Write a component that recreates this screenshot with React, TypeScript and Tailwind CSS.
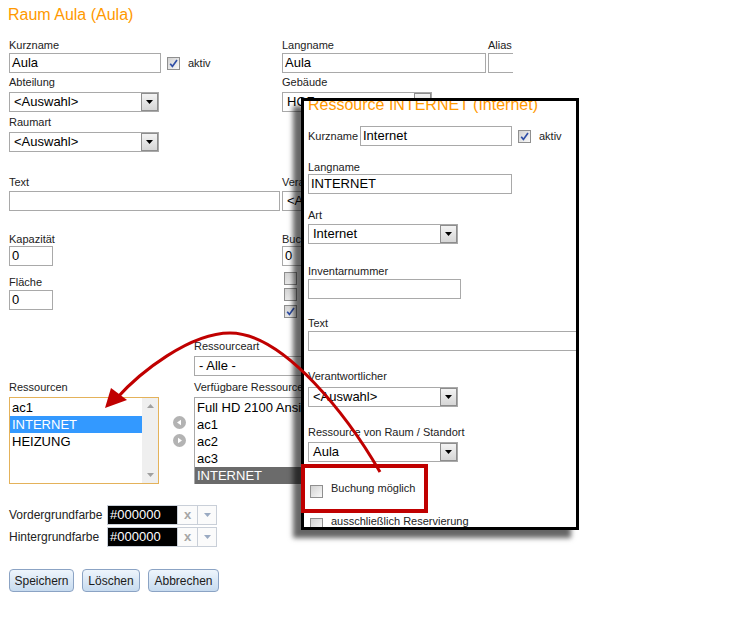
import React from 'react';

// ── Small form primitives (old XP-style widgets) ─────────────────────────────
const Label: React.FC<{ children: React.ReactNode; className?: string }> = ({ children, className = '' }) => (
  <div className={`whitespace-nowrap text-[11px] leading-[13px] text-[#222] ${className}`}>{children}</div>
);

const Input: React.FC<{ children?: React.ReactNode; className?: string }> = ({ children, className = '' }) => (
  <div className={`flex h-[20px] shrink-0 items-center overflow-hidden whitespace-nowrap border border-[#a9a9a9] bg-white pl-[2px] text-[13px] leading-[18px] text-black ${className}`}>
    {children}
  </div>
);

const Select: React.FC<{ value: string; className?: string }> = ({ value, className = '' }) => (
  <div className={`flex h-[20px] shrink-0 border border-[#a9a9a9] bg-white ${className}`}>
    <div className="flex-1 overflow-hidden whitespace-nowrap pl-[4px] text-[13px] leading-[18px] text-black">{value}</div>
    <div className="flex h-[18px] w-[17px] items-center justify-center border border-[#8d8d8d] bg-gradient-to-b from-[#f3f3f3] to-[#d6d6d6]">
      <svg width="7" height="4" viewBox="0 0 7 4">
        <polygon points="0,0 7,0 3.5,4" fill="#000" />
      </svg>
    </div>
  </div>
);

const Check: React.FC<{ checked?: boolean; className?: string }> = ({ checked, className = '' }) => (
  <span className={`inline-flex h-[13px] w-[13px] shrink-0 items-center justify-center border border-[#8f8f8f] bg-gradient-to-br from-[#d2d2d2] to-[#f8f8f8] ${className}`}>
    {checked && (
      <svg width="9" height="9" viewBox="0 0 9 9">
        <path d="M1.2 4.8 L3.4 7.4 L8 1" stroke="#2f4ea6" strokeWidth="1.7" fill="none" />
      </svg>
    )}
  </span>
);

const CircleBtn: React.FC<{ dir: 'left' | 'right' }> = ({ dir }) => (
  <svg width="13" height="13" viewBox="0 0 13 13">
    <circle cx="6.5" cy="6.5" r="6.5" fill="#b3b3b3" />
    {dir === 'left' ? <polygon points="4,6.5 8,3.8 8,9.2" fill="#fff" /> : <polygon points="9,6.5 5,3.8 5,9.2" fill="#fff" />}
  </svg>
);

const ColorField: React.FC<{ label: string; className?: string }> = ({ label, className = '' }) => (
  <div className={`flex items-center ${className}`}>
    <div className="w-[98px] text-[12px] leading-[14px] text-[#222]">{label}</div>
    <div className="flex h-[20px] w-[71px] items-center border border-[#c9cfd8] bg-black pl-[2px] text-[13px] text-white">#000000</div>
    <div className="flex h-[20px] w-[20px] items-center justify-center border-y border-r border-[#c9cfd8] bg-[#fbfbfb] text-[13px] font-bold text-[#a6a6a6]">x</div>
    <div className="flex h-[20px] w-[19px] items-center justify-center border-y border-r border-[#c9cfd8] bg-[#fbfbfb]">
      <svg width="7" height="4" viewBox="0 0 7 4">
        <polygon points="0,0 7,0 3.5,4" fill="#9aaac2" />
      </svg>
    </div>
  </div>
);

const Button: React.FC<{ children: React.ReactNode; className?: string }> = ({ children, className = '' }) => (
  <div className={`flex h-[23px] items-center justify-center rounded-[4px] border border-[#8ba3c4] bg-gradient-to-b from-[#eef5fc] to-[#c7dbef] text-[12px] text-[#1b1b1b] ${className}`}>
    {children}
  </div>
);

export default function App() {
  return (
    <div className="relative h-[632px] w-[743px] overflow-hidden bg-white font-['Liberation_Sans',Arial,sans-serif]">
      {/* ── Room form (background) ─────────────────────────────────────── */}
      <div className="w-[513px] overflow-hidden pl-[9px]">
        <div className="-ml-px pt-[5px] text-[16px] leading-[20px] text-[#ff9900]">Raum Aula (Aula)</div>

        <div className="mt-[14px] flex">
          {/* left column */}
          <div className="w-[273px] shrink-0">
            <Label>Kurzname</Label>
            <div className="mt-px flex items-center">
              <Input className="w-[152px]">Aula</Input>
              <Check checked className="ml-[6px]" />
              <span className="ml-[8px] text-[11px] text-[#222]">aktiv</span>
            </div>
            <Label className="mt-[3px]">Abteilung</Label>
            <Select className="mt-[3px] w-[150px]" value="<Auswahl>" />
            <Label className="mt-[4px]">Raumart</Label>
            <Select className="mt-[3px] w-[150px]" value="<Auswahl>" />
            <Label className="mt-[24px]">Text</Label>
            <Input className="mt-[2px] w-[271px]" />
            <Label className="mt-[22px]">Kapazität</Label>
            <Input className="w-[44px]">0</Input>
            <Label className="mt-[10px]">Fläche</Label>
            <Input className="mt-px w-[44px]">0</Input>
          </div>

          {/* right column */}
          <div className="flex-1">
            <div className="flex">
              <div className="w-[206px] shrink-0">
                <Label>Langname</Label>
                <Input className="mt-px w-[204px]">Aula</Input>
              </div>
              <div>
                <Label>Alias</Label>
                <Input className="mt-px w-[80px]" />
              </div>
            </div>
            <Label className="mt-[3px]">Gebäude</Label>
            <Select className="mt-[3px] w-[150px]" value="HOF" />
            <Label className="mt-[64px]">Verantwortlicher</Label>
            <Select className="mt-[2px] w-[150px]" value="<Auswahl>" />
            <Label className="mt-[22px]">Buchbar ab</Label>
            <Input className="w-[44px]">0</Input>
            <div className="mt-[6px] ml-[2px] flex flex-col gap-[3px]">
              <Check />
              <Check />
              <Check checked className="mt-px" />
            </div>
          </div>
        </div>

        {/* resources */}
        <div className="mt-[22px] flex items-end">
          <div className="w-[150px] shrink-0">
            <Label>Ressourcen</Label>
            <div className="mt-[3px] flex h-[87px] border border-[#e4b25a] bg-white">
              <div className="flex-1 pt-px text-[13px] leading-[17px]">
                <div className="pl-[2px]">ac1</div>
                <div className="bg-[#3399ff] pl-[2px] text-white">INTERNET</div>
                <div className="pl-[2px]">HEIZUNG</div>
              </div>
              <div className="flex w-[16px] flex-col items-center justify-between bg-[#efefef] py-[6px]">
                <svg width="7" height="4" viewBox="0 0 7 4"><polygon points="3.5,0 7,4 0,4" fill="#a0a0a0" /></svg>
                <svg width="7" height="4" viewBox="0 0 7 4"><polygon points="0,0 7,0 3.5,4" fill="#a0a0a0" /></svg>
              </div>
            </div>
          </div>
          <div className="mb-[37px] ml-[14px] flex flex-col gap-[5px]">
            <CircleBtn dir="left" />
            <CircleBtn dir="right" />
          </div>
          <div className="ml-[8px] w-[220px]">
            <Label>Ressourceart</Label>
            <Select className="mt-[3px] w-[200px]" value="- Alle -" />
            <Label className="mt-[5px]">Verfügbare Ressourcen</Label>
            <div className="mt-[3px] h-[87px] w-[200px] border border-[#a9a9a9] bg-white pt-px text-[13px] leading-[17px]">
              <div className="whitespace-nowrap pl-[2px]">Full HD 2100 Ansicht</div>
              <div className="pl-[2px]">ac1</div>
              <div className="pl-[2px]">ac2</div>
              <div className="pl-[2px]">ac3</div>
              <div className="bg-[#6b6b6b] pl-[2px] text-white">INTERNET</div>
            </div>
          </div>
        </div>

        <ColorField label="Vordergrundfarbe" className="mt-[21px]" />
        <ColorField label="Hintergrundfarbe" className="mt-[2px]" />

        <div className="mt-[22px] flex gap-[8px] pb-[40px]">
          <Button className="w-[65px]">Speichern</Button>
          <Button className="w-[58px]">Löschen</Button>
          <Button className="w-[71px]">Abbrechen</Button>
        </div>
      </div>

      {/* ── Resource popup ─────────────────────────────────────────────── */}
      <div className="absolute left-[301px] top-[98px] h-[432px] w-[278px] overflow-hidden border-[3px] border-black bg-white pl-[4px] shadow-[-8px_8px_5px_rgba(0,0,0,0.6)]">
        <div className="-mt-[6px] whitespace-nowrap text-[16px] leading-[20px] text-[#ff9900]">Ressource INTERNET (Internet)</div>
        <div className="mt-[11px] flex items-center">
          <Label className="w-[52px]">Kurzname</Label>
          <Input className="w-[152px]">Internet</Input>
          <Check checked className="ml-[6px]" />
          <span className="ml-[8px] text-[11px] text-[#222]">aktiv</span>
        </div>
        <Label className="mt-[15px]">Langname</Label>
        <Input className="w-[204px]">INTERNET</Input>
        <Label className="mt-[15px]">Art</Label>
        <Select className="mt-[2px] w-[150px]" value="Internet" />
        <Label className="mt-[21px]">Inventarnummer</Label>
        <Input className="mt-px w-[153px]" />
        <Label className="mt-[18px]">Text</Label>
        <Input className="mt-px w-[300px]" />
        <Label className="mt-[19px]">Verantwortlicher</Label>
        <Select className="mt-[4px] w-[150px]" value="<Auswahl>" />
        <Label className="mt-[19px]">Ressource von Raum / Standort</Label>
        <Select className="mt-[3px] w-[150px]" value="Aula" />
        <div className="ml-[2px] mt-[23px] flex items-start">
          <Check />
          <span className="-mt-[3px] ml-[8px] text-[11px] leading-[13px] text-[#222]">Buchung möglich</span>
        </div>
        <div className="ml-[2px] mt-[20px] flex items-start">
          <Check />
          <span className="-mt-[3px] ml-[8px] text-[11px] leading-[13px] text-[#222]">ausschließlich Reservierung</span>
        </div>
      </div>

      {/* ── Annotation: red highlight + arrow ──────────────────────────── */}
      <div className="absolute left-[301px] top-[464px] h-[49px] w-[127px] border-4 border-[#c00000]" />
      <svg className="pointer-events-none absolute left-0 top-0" width="743" height="632" viewBox="0 0 743 632">
        <path d="M380 472 C350 420 285 333 230 333 C190 333 140 372 116 399" stroke="#c00000" strokeWidth="3" fill="none" />
        <polygon points="105,408 111,388 127,400" fill="#c00000" />
      </svg>
    </div>
  );
}
